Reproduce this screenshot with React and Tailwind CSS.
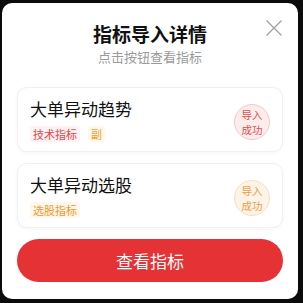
import React from "react";

const font = { fontFamily: '"Noto Sans CJK SC", "Noto Sans", sans-serif' };

const items = [
  {
    name: "大单异动趋势",
    tags: [
      { text: "技术指标", cls: "text-[#e0474c] bg-[#fdf1f1]" },
      { text: "副", cls: "text-[#f0a030] bg-[#fff7ec]" },
    ],
    badge: "text-[#d9534f] bg-[#fcecec] border-[#f3c9c9]",
  },
  {
    name: "大单异动选股",
    tags: [{ text: "选股指标", cls: "text-[#eb9a2c] bg-[#fff7ec]" }],
    badge: "text-[#e6a14a] bg-[#fdf3e7] border-[#f6dfc3]",
  },
];

function Card({ item }) {
  return (
    <div className="flex h-[65px] items-center rounded-[10px] border border-[#f0f0f0] bg-white pl-[12px] pr-[12px] shadow-[0_1px_4px_rgba(0,0,0,0.04)]">
      <div className="flex flex-1 flex-col">
        <div className="text-[17px] leading-[24px] text-[#111]">{item.name}</div>
        <div className="mt-[5px] flex gap-[8px]">
          {item.tags.map((t) => (
            <span key={t.text} className={`rounded-[3px] px-[3px] text-[11px] leading-[16px] ${t.cls}`}>
              {t.text}
            </span>
          ))}
        </div>
      </div>
      <div
        className={`mt-[4px] flex h-[36px] w-[36px] flex-col items-center justify-center rounded-full border text-[10.5px] leading-[15px] ${item.badge}`}
      >
        <span>导入</span>
        <span>成功</span>
      </div>
    </div>
  );
}

export default function App() {
  return (
    <div className="h-[303px] w-[303px] bg-[#0b0b0b] pl-[2px] pt-[3px]" style={font}>
      <div className="relative flex h-[296px] w-[296px] flex-col rounded-[10px] bg-white px-[15px]">
        <div className="pt-[17px] text-center text-[19px] leading-[27px] font-semibold text-[#111]">指标导入详情</div>
        <div className="mt-[1px] text-center text-[13px] leading-[18px] text-[#9a9a9a]">点击按钮查看指标</div>
        <button className="absolute right-[16px] top-[17px] text-[#a0a0a0]">
          <svg width="16" height="16" viewBox="0 0 16 16" fill="none" stroke="currentColor" strokeWidth="1.3">
            <path d="M0.5 0.5L15.5 15.5M15.5 0.5L0.5 15.5" />
          </svg>
        </button>
        <div className="mt-[21px] flex flex-col gap-[11px]">
          {items.map((it) => (
            <Card key={it.name} item={it} />
          ))}
        </div>
        <button className="mt-[11px] h-[43px] w-full rounded-full bg-[#e53234] text-[17px] text-white">查看指标</button>
      </div>
    </div>
  );
}
